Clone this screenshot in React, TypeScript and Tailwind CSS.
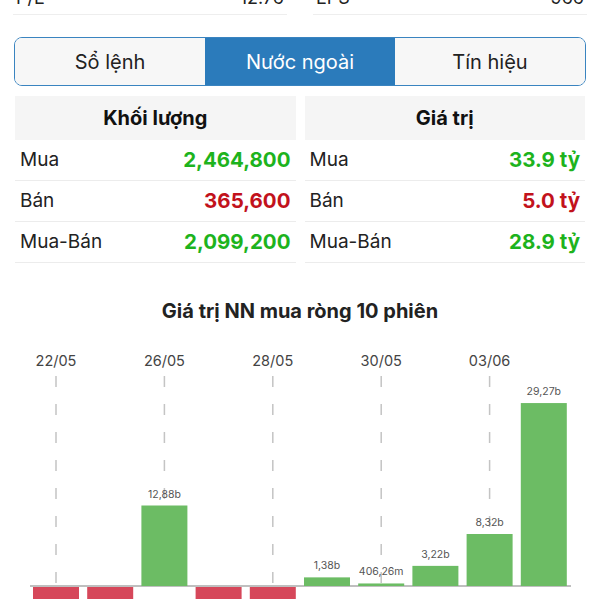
import React from "react";

const volumeRows = [
	{ label: "Mua", value: "2,464,800", up: true },
	{ label: "Bán", value: "365,600", up: false },
	{ label: "Mua-Bán", value: "2,099,200", up: true },
];

const valueRows = [
	{ label: "Mua", value: "33.9 tỷ", up: true },
	{ label: "Bán", value: "5.0 tỷ", up: false },
	{ label: "Mua-Bán", value: "28.9 tỷ", up: true },
];

// net buy value of foreign investors, in billions (negative = net sell)
const sessions = [
	{ date: "22/05", value: -3, label: "" },
	{ date: "23/05", value: -3, label: "" },
	{ date: "26/05", value: 12.88, label: "12,88b" },
	{ date: "27/05", value: -3, label: "" },
	{ date: "28/05", value: -3, label: "" },
	{ date: "29/05", value: 1.38, label: "1,38b" },
	{ date: "30/05", value: 0.40626, label: "406,26m" },
	{ date: "02/06", value: 3.22, label: "3,22b" },
	{ date: "03/06", value: 8.32, label: "8,32b" },
	{ date: "04/06", value: 29.27, label: "29,27b" },
];

const BASE_Y = 587;
const SCALE = 6.25;
const SLOT = 54.2;
const BAR_W = 46;
const START_X = 33;

function StatTable({
	title,
	rows,
}: {
	title: string;
	rows: { label: string; value: string; up: boolean }[];
}) {
	return (
		<div className="flex flex-col">
			<div className="h-[44px] bg-[#f5f5f5] flex items-center justify-center text-[20px] font-bold text-[#111]">
				{title}
			</div>
			{rows.map((row) => (
				<div
					key={row.label}
					className="h-[41px] border-b border-[#ececec] flex items-center justify-between px-[5px]"
				>
					<span className="text-[19px] text-[#222]">{row.label}</span>
					<span
						className={`text-[20.5px] font-bold ${
							row.up ? "text-[#1db31d]" : "text-[#c2121c]"
						}`}
					>
						{row.value}
					</span>
				</div>
			))}
		</div>
	);
}

function NetBuyChart() {
	return (
		<svg
			width="600"
			height="260"
			viewBox="0 340 600 260"
			className="block"
			style={{ fontFamily: "Inter, 'Liberation Sans', sans-serif" }}
		>
			{sessions.map((s, i) =>
				i % 2 === 0 ? (
					<g key={"grid" + s.date}>
						<line
							x1={START_X + i * SLOT + BAR_W / 2}
							x2={START_X + i * SLOT + BAR_W / 2}
							y1={377}
							y2={597}
							stroke="#c4c4c4"
							strokeWidth={1.5}
							strokeDasharray="11 17"
						/>
						<text
							x={START_X + i * SLOT + BAR_W / 2}
							y={367}
							textAnchor="middle"
							fontSize={14.5}
							fill="#444"
						>
							{s.date}
						</text>
					</g>
				) : null
			)}
			<line x1={30} x2={571} y1={BASE_Y} y2={BASE_Y} stroke="#aaa" strokeWidth={1.5} />
			{sessions.map((s, i) => {
				const x = START_X + i * SLOT;
				if (s.value < 0) {
					return (
						<rect
							key={s.date}
							x={x}
							y={BASE_Y + 1}
							width={BAR_W}
							height={20}
							fill="#d6475a"
						/>
					);
				}
				const h = Math.max(s.value * SCALE, 2.5);
				return (
					<g key={s.date}>
						<rect x={x} y={BASE_Y - h} width={BAR_W} height={h} fill="#6cbc64" />
						<text
							x={x + BAR_W / 2}
							y={BASE_Y - h - 8}
							textAnchor="middle"
							fontSize={10.5}
							fill="#555"
						>
							{s.label}
						</text>
					</g>
				);
			})}
		</svg>
	);
}

export default function App() {
	return (
		<div className="w-[600px] h-[600px] overflow-hidden bg-white font-['Inter','Liberation_Sans',sans-serif]">
			{/* tail of the ratio rows, scrolled off the top */}
			<div className="grid grid-cols-2 gap-[26px] px-[13px] -mt-[20px]">
				<div className="h-[35px] border-b border-[#eeeeee] flex items-center justify-between px-[3px] text-[18px] text-[#222]">
					<span>P/E</span>
					<span>12.76</span>
				</div>
				<div className="h-[35px] border-b border-[#eeeeee] flex items-center justify-between px-[3px] text-[18px] text-[#222]">
					<span>EPS</span>
					<span>966</span>
				</div>
			</div>

			<div className="mx-[14px] mt-[22px] h-[49px] border border-[#3a84c0] rounded-[8px] overflow-hidden grid grid-cols-3">
				<div className="bg-[#f7f7f7] flex items-center justify-center text-[20px] text-[#222]">
					Sổ lệnh
				</div>
				<div className="bg-[#2b7bbb] flex items-center justify-center text-[20px] text-white">
					Nước ngoài
				</div>
				<div className="bg-[#f7f7f7] flex items-center justify-center text-[20px] text-[#222]">
					Tín hiệu
				</div>
			</div>

			<div className="grid grid-cols-2 gap-[9px] px-[15px] mt-[10px]">
				<StatTable title="Khối lượng" rows={volumeRows} />
				<StatTable title="Giá trị" rows={valueRows} />
			</div>

			<div className="mt-[36px] text-center text-[20px] font-bold text-[#222] leading-[24px]">
				Giá trị NN mua ròng 10 phiên
			</div>
			<div className="mt-[16px]">
				<NetBuyChart />
			</div>
		</div>
	);
}
